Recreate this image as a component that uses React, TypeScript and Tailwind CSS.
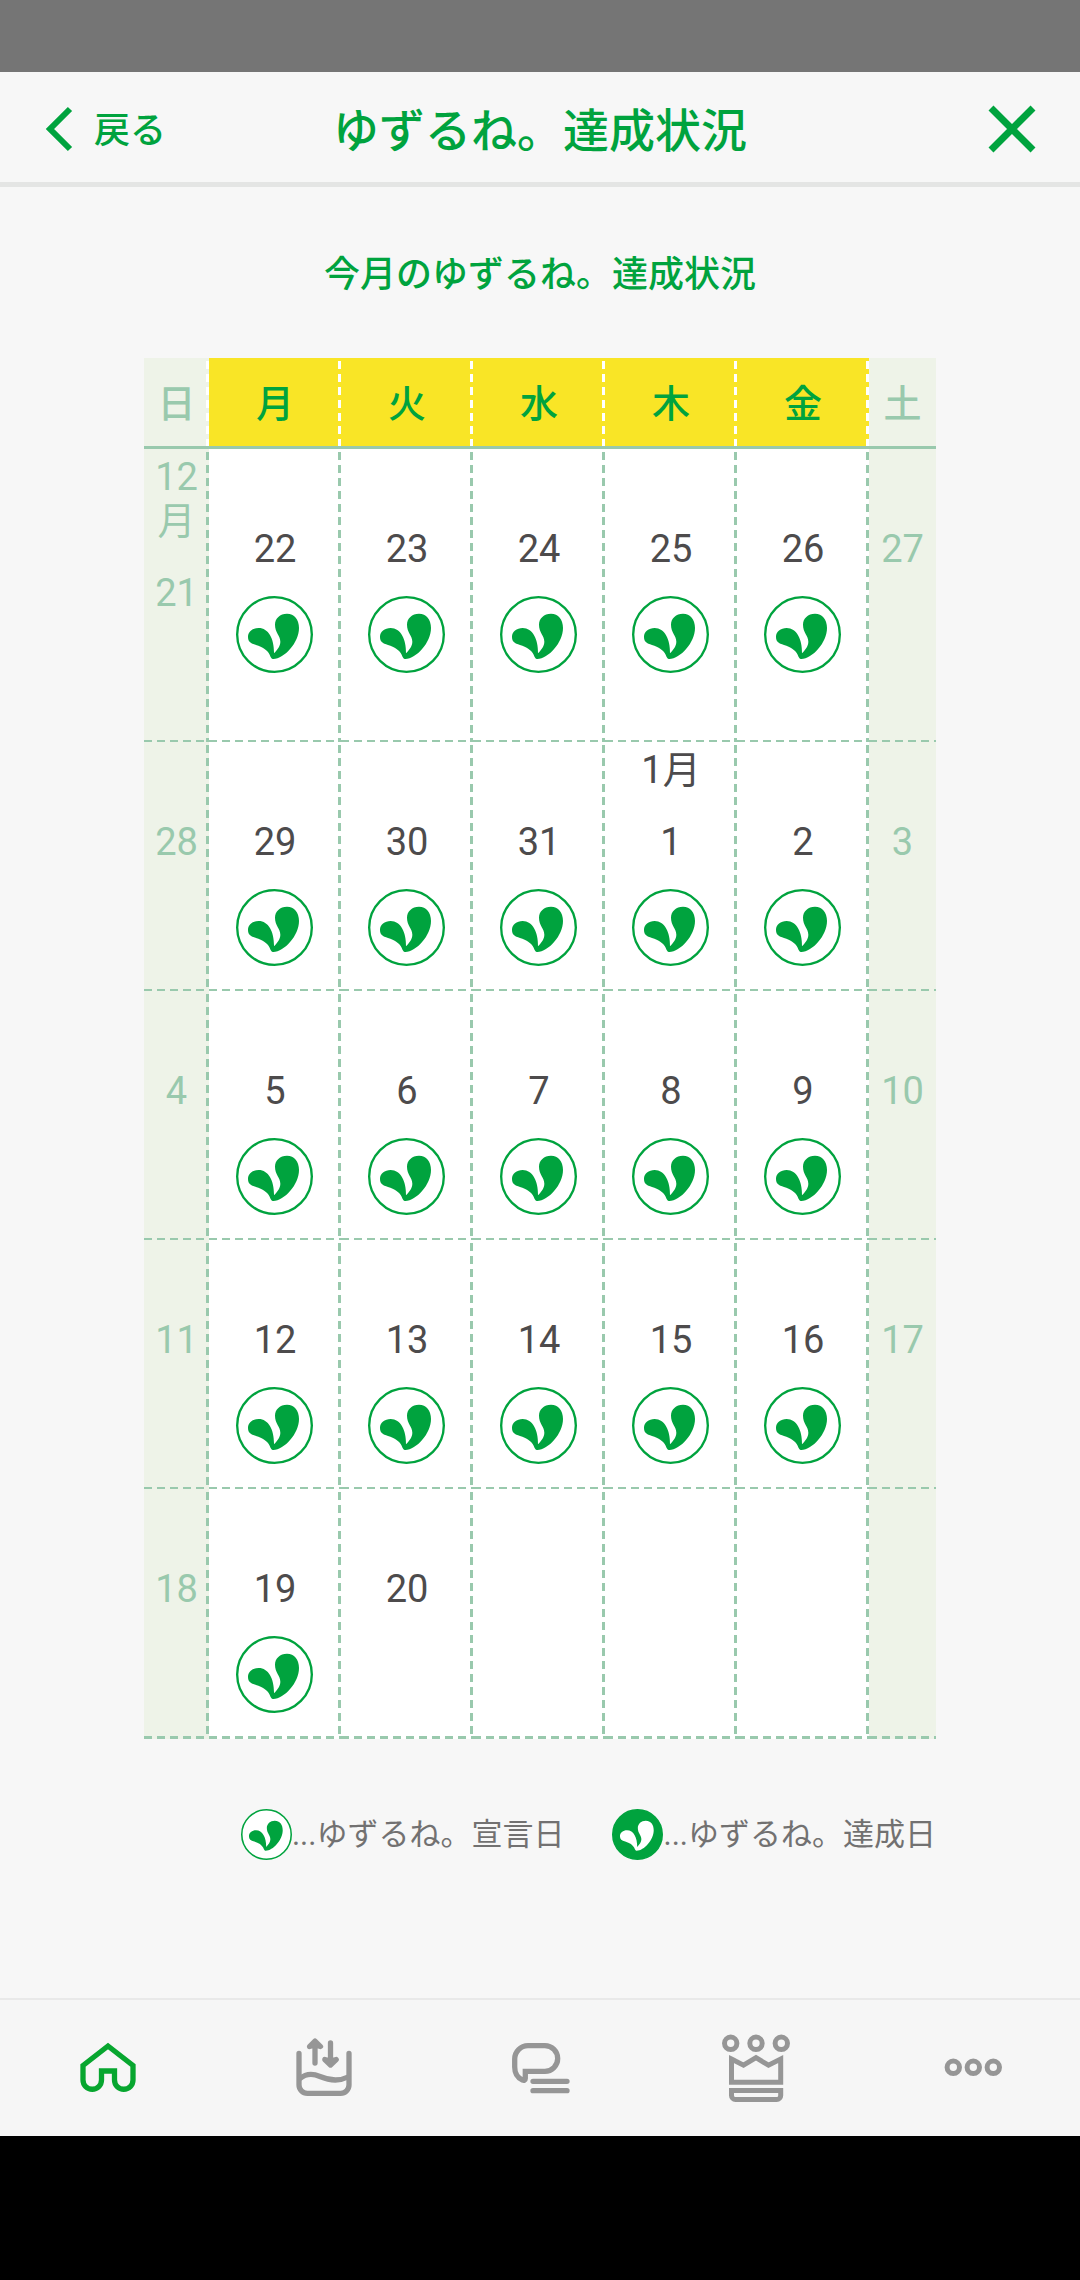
import React from 'react';

interface Day {
  date?: number;
  month?: string;
  declared?: boolean;
}

const weekdays = ['日', '月', '火', '水', '木', '金', '土'];

const weeks: Day[][] = [
  [
    { date: 21, month: '12月' },
    { date: 22, declared: true },
    { date: 23, declared: true },
    { date: 24, declared: true },
    { date: 25, declared: true },
    { date: 26, declared: true },
    { date: 27 },
  ],
  [
    { date: 28 },
    { date: 29, declared: true },
    { date: 30, declared: true },
    { date: 31, declared: true },
    { date: 1, month: '1月', declared: true },
    { date: 2, declared: true },
    { date: 3 },
  ],
  [
    { date: 4 },
    { date: 5, declared: true },
    { date: 6, declared: true },
    { date: 7, declared: true },
    { date: 8, declared: true },
    { date: 9, declared: true },
    { date: 10 },
  ],
  [
    { date: 11 },
    { date: 12, declared: true },
    { date: 13, declared: true },
    { date: 14, declared: true },
    { date: 15, declared: true },
    { date: 16, declared: true },
    { date: 17 },
  ],
  [{ date: 18 }, { date: 19, declared: true }, { date: 20 }, {}, {}, {}, {}],
];

const isWeekend = (index: number) => index === 0 || index === 6;

// Dashed rules: right edge first, bottom edge second
const headDashes =
  'bg-[linear-gradient(to_bottom,transparent_0_3px,#ffffff_3px_11px,transparent_11px)] bg-[length:3px_13px] bg-right-top bg-repeat-y last:bg-none';
const cellDashes =
  '[background-image:repeating-linear-gradient(to_bottom,transparent_0_3px,#99c9ad_3px_11px,transparent_11px_13px),repeating-linear-gradient(to_right,#99c9ad_0_8px,transparent_8px_13px)] [background-position:right_top,left_bottom] bg-no-repeat';

const LeafMark: React.FC<{ className: string; filled?: boolean }> = ({
  className,
  filled,
}) => (
  <svg viewBox="0 0 231 231" className={className} aria-hidden="true">
    <circle
      cx="115.5"
      cy="115.5"
      r="112"
      fill={filled ? '#00a33e' : '#ffffff'}
      stroke="#00a33e"
      strokeWidth="7"
    />
    <path
      d="M36 123C36 107 50 96 68 96C98 96 115 130 114 172C125 160 133 150 133 137C133 118 117 110 117 86C117 67 132 53 153 53C175 53 189 70 189 96C189 140 145 188 112 189C107 190 104 184 101 176C95 163 80 153 60 147C44 142 36 137 36 123Z"
      fill={filled ? '#ffffff' : '#00a33e'}
    />
  </svg>
);

const NavIcon: React.FC<{ children: React.ReactNode }> = ({ children }) => (
  <svg
    viewBox="0 0 80 80"
    className="h-20 w-20"
    fill="none"
    stroke="currentColor"
    strokeWidth="5.3"
    aria-hidden="true"
  >
    {children}
  </svg>
);

const navItems = [
  {
    label: 'ホーム',
    active: true,
    icon: (
      <path d="M15 37.5L40 18L65 37.5V52a9.25 9.25 0 0 1-18.5 0V43H33.5V52a9.25 9.25 0 0 1-18.5 0Z" />
    ),
  },
  {
    label: '入出金',
    icon: (
      <g strokeLinecap="round" strokeLinejoin="round">
        <path d="M15 25.5V57a8.3 8.3 0 0 0 8.3 8.3H56.7a8.3 8.3 0 0 0 8.3-8.3V25.5" />
        <path d="M16 50.5C22 45.5 29 45.5 36 48.5S54 54 64 49" />
        <path d="M31 35V14M25.5 18.5L31 13L36.5 18.5L31 17Z" />
        <path d="M46.5 15V36M40.8 31.5L46.5 37L52.2 31.5L46.5 33Z" />
      </g>
    ),
  },
  {
    label: 'メッセージ',
    icon: (
      <g strokeLinecap="round">
        <path d="M25.3 43.3V50.5C25.3 52 24 52.6 22.5 52C18 50 14.7 45.5 14.7 39V31A13.3 13.3 0 0 1 28 17.7H44.9a12.8 12.8 0 0 1 0 25.6Z" />
        <path d="M33 53.3H67M33 62.7H67" />
      </g>
    ),
  },
  {
    label: 'ランキング',
    icon: (
      <g strokeWidth="5">
        <circle cx="14.7" cy="15.3" r="6.2" />
        <circle cx="40" cy="15.3" r="6.2" />
        <circle cx="65.3" cy="15.3" r="6.2" />
        <path d="M15.5 31L27.5 37.2L40 29.7L52.5 37.2L64.7 31V54.3H15.5Z" />
        <path d="M15.5 62.5H64.7V67.5a4 4 0 0 1-4 4H19.5a4 4 0 0 1-4-4Z" />
      </g>
    ),
  },
  {
    label: 'その他',
    icon: (
      <g strokeWidth="5">
        <circle cx="21.3" cy="39.3" r="6.2" />
        <circle cx="41.3" cy="39.3" r="6.2" />
        <circle cx="61.3" cy="39.3" r="6.2" />
      </g>
    ),
  },
];

const Header: React.FC = () => (
  <header className="grid h-[115px] grid-cols-[1fr_auto_1fr] items-center border-b-[5px] border-[#e4e5e4] px-11 pt-1 text-[#00a33e]">
    <button type="button" className="flex items-center gap-5 text-4xl font-medium">
      <svg viewBox="0 0 30 46" className="h-[46px] w-[30px]" aria-hidden="true">
        <path d="M26 3L6 23L26 43" fill="none" stroke="currentColor" strokeWidth="6" />
      </svg>
      <span className="pt-1">戻る</span>
    </button>
    <h1 className="pt-1 text-[46px] leading-[56px] font-medium">
      ゆずるね。達成状況
    </h1>
    <button type="button" aria-label="閉じる" className="justify-self-end">
      <svg viewBox="0 0 48 48" className="h-12 w-12" aria-hidden="true">
        <path d="M3 3L45 45M45 3L3 45" stroke="currentColor" strokeWidth="7" />
      </svg>
    </button>
  </header>
);

const DayCell: React.FC<{ day: Day; weekend: boolean; last: boolean }> = ({
  day,
  weekend,
  last,
}) => (
  <td
    className={`p-0 align-top ${cellDashes} ${last ? '[background-size:3px_100%,100%_3px] last:[background-size:0_0,100%_3px]' : '[background-size:3px_100%,100%_2px] last:[background-size:0_0,100%_2px]'} ${weekend ? 'bg-[#eef3e8] text-[#99c9ad]' : 'bg-white text-[#4d4b4c]'}`}
  >
    <div
      className={`flex flex-col items-center pt-1.5 text-center ${last ? 'pb-[26px]' : 'pb-[25px]'}`}
    >
      <div className="mb-7 min-h-11 px-1">{day.month}</div>
      <div className="h-11">{day.date}</div>
      <div className="mt-[25px] h-[77px] pr-0.5">
        {day.declared && <LeafMark className="h-[77px] w-[77px]" />}
      </div>
    </div>
  </td>
);

const Calendar: React.FC = () => (
  <table className="w-full table-fixed border-separate border-spacing-0 text-[38px] leading-[44px]">
    <colgroup>
      <col className="w-[65px]" />
      <col span={5} />
      <col className="w-[67px]" />
    </colgroup>
    <thead>
      <tr className="h-[91px]">
        {weekdays.map((name, index) => (
          <th
            key={name}
            scope="col"
            className={`border-b-[3px] border-[#99c9ad] p-0 pt-1 font-medium ${headDashes} ${isWeekend(index) ? 'bg-[#eef3e8] text-[#99c9ad]' : 'bg-[#f9e526] text-[#00a33e]'}`}
          >
            {name}
          </th>
        ))}
      </tr>
    </thead>
    <tbody>
      {weeks.map((week, row) => (
        <tr key={row}>
          {week.map((day, index) => (
            <DayCell
              key={index}
              day={day}
              weekend={isWeekend(index)}
              last={row === weeks.length - 1}
            />
          ))}
        </tr>
      ))}
    </tbody>
  </table>
);

const App: React.FC = () => {
  return (
    <div className="flex min-h-screen flex-col bg-[#f7f7f7] font-[Roboto,'Noto_Sans_CJK_JP',sans-serif]">
      <div className="h-18 bg-[#757575]" />
      <Header />
      <main className="flex-1 px-36 pt-[62px]">
        <h2 className="mb-[57px] text-center text-4xl leading-[52px] font-medium text-[#00a33e]">
          今月のゆずるね。達成状況
        </h2>
        <Calendar />
        <div className="mt-[70px] flex justify-end gap-12 text-[31px] leading-[51px] text-[#727171]">
          <div className="flex items-center">
            <LeafMark className="h-[51px] w-[51px]" />
            <span>...ゆずるね。宣言日</span>
          </div>
          <div className="flex items-center">
            <LeafMark className="h-[51px] w-[51px]" filled />
            <span>...ゆずるね。達成日</span>
          </div>
        </div>
      </main>
      <nav className="grid h-[138px] grid-cols-5 border-t-2 border-[#e9e9e9] bg-[#f6f6f6]">
        {navItems.map(({ label, icon, active }) => (
          <a
            key={label}
            href="#"
            aria-label={label}
            className={`flex items-center justify-center ${active ? 'text-[#07a62f]' : 'text-[#969696]'}`}
          >
            <NavIcon>{icon}</NavIcon>
          </a>
        ))}
      </nav>
      <div className="h-36 bg-black" />
    </div>
  );
};

export default App;
